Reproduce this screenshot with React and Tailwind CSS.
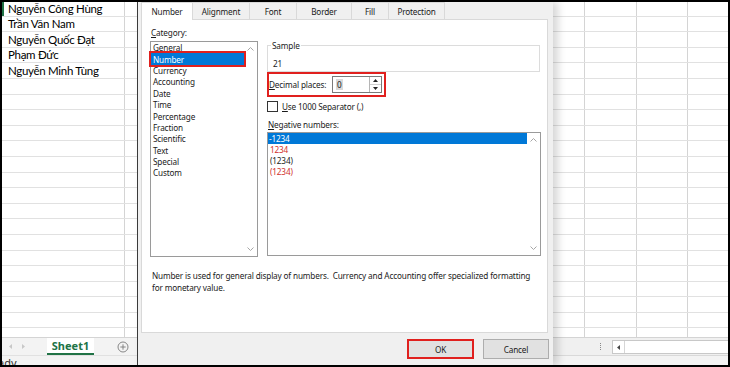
import React from "react";

const ROWS = 23;

function Chevron({ dir = "up", color = "#a6a6a6" }) {
  return (
    <svg width="7" height="5" viewBox="0 0 7 5">
      <polyline
        points={dir === "up" ? "0.5,4.5 3.5,1.5 6.5,4.5" : "0.5,0.5 3.5,3.5 6.5,0.5"}
        fill="none"
        stroke={color}
        strokeWidth="1"
      />
    </svg>
  );
}

function Tri({ dir = "up", color = "#222", w = 5, h = 3 }) {
  const pts =
    dir === "up"
      ? `0,${h} ${w / 2},0 ${w},${h}`
      : dir === "down"
      ? `0,0 ${w / 2},${h} ${w},0`
      : dir === "left"
      ? `${w},0 0,${h / 2} ${w},${h}`
      : `0,0 ${w},${h / 2} 0,${h}`;
  return (
    <svg width={w} height={h} viewBox={`0 0 ${w} ${h}`}>
      <polygon points={pts} fill={color} />
    </svg>
  );
}

function LeftSheet() {
  const names = [
    "Nguyễn Công Hùng",
    "Trần Văn Nam",
    "Nguyễn Quốc Đạt",
    "Phạm Đức",
    "Nguyễn Minh Tùng",
  ];
  return (
    <div className="w-[135px] shrink-0 flex flex-col bg-white">
      <div className="h-[335px] overflow-hidden flex flex-col">
        {Array.from({ length: ROWS }).map((_, i) => (
          <div
            key={i}
            className={`flex shrink-0 border-b border-[#e1e1e1] ${i === 0 ? "h-[14.6px]" : "h-[15.6px]"}`}
          >
            <div
              className={`w-[123px] shrink-0 border-r border-[#d4d4d4] flex items-center text-[11.5px] tracking-[-0.3px] leading-none text-black font-['Lato',sans-serif] ${
                i === 0 ? "border-l-2 border-l-[#217346] pl-[4px]" : "pl-[6px]"
              }`}
            >
              {names[i] || ""}
            </div>
            <div className="flex-1" />
          </div>
        ))}
      </div>
      <div className="h-[18px] shrink-0 bg-[#f3f3f3] border-t border-[#d4d4d4] flex items-stretch">
        <div className="w-[16px] flex items-center justify-center">
          <Tri dir="left" color="#c8c8c8" w={3} h={5} />
        </div>
        <div className="w-[10px] flex items-center justify-center">
          <Tri dir="right" color="#c8c8c8" w={3} h={5} />
        </div>
        <div className="w-[19px]" />
        <div className="w-[47px] bg-white border-b-2 border-[#217346] flex items-center justify-center text-[11px] font-bold text-[#217346] font-['Noto_Sans',sans-serif] leading-none">
          Sheet1
        </div>
        <div className="w-[23px]" />
        <div className="flex items-center">
          <svg width="12" height="12" viewBox="0 0 12 12">
            <circle cx="6" cy="6" r="5" fill="none" stroke="#7a7a7a" strokeWidth="0.9" />
            <line x1="6" y1="3.3" x2="6" y2="8.7" stroke="#7a7a7a" strokeWidth="0.9" />
            <line x1="3.3" y1="6" x2="8.7" y2="6" stroke="#7a7a7a" strokeWidth="0.9" />
          </svg>
        </div>
      </div>
      <div className="h-[10px] shrink-0 bg-[#f3f3f3] border-t border-[#e1e1e1] overflow-hidden">
        <div className="ml-[-17px] text-[11px] leading-[12px] pt-[1px] text-[#333] font-['Noto_Sans',sans-serif]">
          Ready
        </div>
      </div>
    </div>
  );
}

function RightSheet() {
  return (
    <div className="flex-1 flex flex-col bg-white">
      <div className="h-[335px] overflow-hidden flex flex-col">
        {Array.from({ length: ROWS }).map((_, i) => (
          <div
            key={i}
            className={`flex shrink-0 border-b border-[#e1e1e1] ${i === 0 ? "h-[14.6px]" : "h-[15.6px]"}`}
          >
            <div className="w-[32px] shrink-0 border-r border-[#d4d4d4]" />
            <div className="w-[52px] shrink-0 border-r border-[#d4d4d4]" />
            <div className="w-[51px] shrink-0 border-r border-[#d4d4d4]" />
            <div className="flex-1" />
          </div>
        ))}
      </div>
      <div className="h-[18px] shrink-0 bg-[#f0f0f0] border-t border-[#d4d4d4] flex items-start">
        <div className="w-[45px]" />
        <div className="w-[4px] h-full flex flex-col items-center justify-center gap-[1px]">
          <div className="w-[1px] h-[1px] bg-[#888]" />
          <div className="w-[1px] h-[1px] bg-[#888]" />
          <div className="w-[1px] h-[1px] bg-[#888]" />
          <div className="w-[1px] h-[1px] bg-[#888]" />
        </div>
        <div className="w-[10px]" />
        <div className="flex-1 mt-[2px] h-[14px] bg-white border border-r-0 border-[#c8c8c8] flex">
          <div className="w-[12px] border-r border-[#d6d6d6] flex items-center justify-center">
            <Tri dir="left" color="#444" w={3} h={5} />
          </div>
        </div>
      </div>
      <div className="h-[10px] shrink-0 bg-[#f3f3f3] border-t border-[#d9d9d9]" />
    </div>
  );
}

function Tabs() {
  const tabs = [
    ["Number", 52],
    ["Alignment", 57],
    ["Font", 47],
    ["Border", 55],
    ["Fill", 37],
    ["Protection", 56],
  ];
  return (
    <div className="h-[17px] shrink-0 flex items-start pl-[3px]">
      {tabs.map(([t, w], i) =>
        i === 0 ? (
          <div
            key={t}
            style={{ width: w }}
            className="h-[18px] relative z-10 bg-white border border-b-0 border-[#d9d9d9] flex items-center justify-center pb-[1px]"
          >
            {t}
          </div>
        ) : (
          <div
            key={t}
            style={{ width: w }}
            className="h-[17px] bg-[#f0f0f0] border-t border-r border-[#d9d9d9] flex items-center justify-center"
          >
            {t}
          </div>
        )
      )}
    </div>
  );
}

function Dialog() {
  const cats = [
    "General",
    "Number",
    "Currency",
    "Accounting",
    "Date",
    "Time",
    "Percentage",
    "Fraction",
    "Scientific",
    "Text",
    "Special",
    "Custom",
  ];
  return (
    <div className="w-[416px] shrink-0 h-full bg-[#f0f0f0] border-l border-[#3a3a3a] flex flex-col relative z-10 shadow-[5px_0_8px_rgba(0,0,0,0.16)] font-['Noto_Sans',sans-serif] text-[8.2px] tracking-[-0.15px] leading-[11px] text-[#1a1a1a]">
      <Tabs />
      <div className="ml-[3px] w-[407px] h-[314px] shrink-0 bg-white border border-[#d9d9d9] flex flex-col">
        <div className="flex pl-[8px]">
          {/* Left column */}
          <div className="w-[108px] shrink-0 flex flex-col">
            <div className="h-[21px] flex items-end pb-[3px] pl-[1px]">
              <span>
                <span className="underline">C</span>ategory:
              </span>
            </div>
            <div className="h-[216px] border border-[#9a9a9a] flex">
              <div className="flex-1 flex flex-col">
                {cats.map((c) =>
                  c === "Number" ? (
                    <div
                      key={c}
                      className="h-[11.4px] bg-[#0078d7] text-white pl-[2px] flex items-center outline-2 outline-solid outline-[#e0201e]"
                    >
                      {c}
                    </div>
                  ) : (
                    <div key={c} className="h-[11.4px] pl-[2px] flex items-center">
                      {c}
                    </div>
                  )
                )}
              </div>
              <div className="w-[13px] shrink-0 flex flex-col justify-between items-center py-[4px]">
                <Chevron dir="up" />
                <Chevron dir="down" />
              </div>
            </div>
          </div>
          {/* Right column */}
          <div className="ml-[9px] w-[274px] shrink-0 flex flex-col">
            <div className="mt-[25px] w-[273px] h-[27px] border border-[#dcdcdc] relative pl-[5px] pt-[12px]">
              <span className="absolute left-[3px] top-[-6px] bg-white px-[1px]">Sample</span>
              21
            </div>
            <div className="w-[119px] h-[25px] border-2 border-[#e0201e] flex items-center">
              <span className="w-[63px] shrink-0 whitespace-nowrap">
                <span className="underline">D</span>ecimal places:
              </span>
              <div className="w-[50px] h-[17px] border border-[#7a7a7a] bg-white flex">
                <div className="flex-1 flex items-center pl-[3px]">
                  <span className="bg-[#d9d9d9] px-[1px]">0</span>
                </div>
                <div className="w-[12px] border-l border-[#b5b5b5] flex flex-col">
                  <div className="flex-1 flex items-center justify-center border-b border-[#d0d0d0]">
                    <Tri dir="up" />
                  </div>
                  <div className="flex-1 flex items-center justify-center">
                    <Tri dir="down" />
                  </div>
                </div>
              </div>
            </div>
            <div className="mt-[4px] h-[11px] flex items-center">
              <div className="w-[11px] h-[11px] border border-[#333] bg-white" />
              <span className="ml-[4px]">
                <span className="underline">U</span>se 1000 Separator (,)
              </span>
            </div>
            <div className="mt-[7px] pl-[1px]">
              <span className="underline">N</span>egative numbers:
            </div>
            <div className="mt-[2px] h-[124px] border border-[#9a9a9a] flex">
              <div className="flex-1 flex flex-col">
                <div className="h-[11px] bg-[#0078d7] text-white pl-[1px] flex items-center">-1234</div>
                <div className="h-[11px] text-[#d0302c] pl-[2px] flex items-center">1234</div>
                <div className="h-[11px] pl-[2px] flex items-center">(1234)</div>
                <div className="h-[11px] text-[#d0302c] pl-[2px] flex items-center">(1234)</div>
              </div>
              <div className="w-[13px] shrink-0 flex flex-col justify-between items-center py-[4px]">
                <Chevron dir="up" />
                <Chevron dir="down" />
              </div>
            </div>
          </div>
        </div>
        <p className="mt-[13px] pl-[10px] pr-[6px] leading-[11.5px]">
          Number is used for general display of numbers.&nbsp; Currency and Accounting offer specialized formatting
          for monetary value.
        </p>
      </div>
      <div className="flex-1 flex justify-end items-start pt-[6px] pr-[4px] gap-[9px]">
        <div className="w-[67px] h-[20px] border-2 border-[#e0201e] bg-[#e1e1e1] flex items-center justify-center">
          OK
        </div>
        <div className="w-[66px] h-[20px] border border-[#adadad] bg-[#e1e1e1] flex items-center justify-center">
          Cancel
        </div>
      </div>
    </div>
  );
}

export default function App() {
  return (
    <div className="w-[730px] h-[367px] border-2 border-black overflow-hidden bg-white">
      <div className="flex h-full">
        <LeftSheet />
        <Dialog />
        <RightSheet />
      </div>
    </div>
  );
}
